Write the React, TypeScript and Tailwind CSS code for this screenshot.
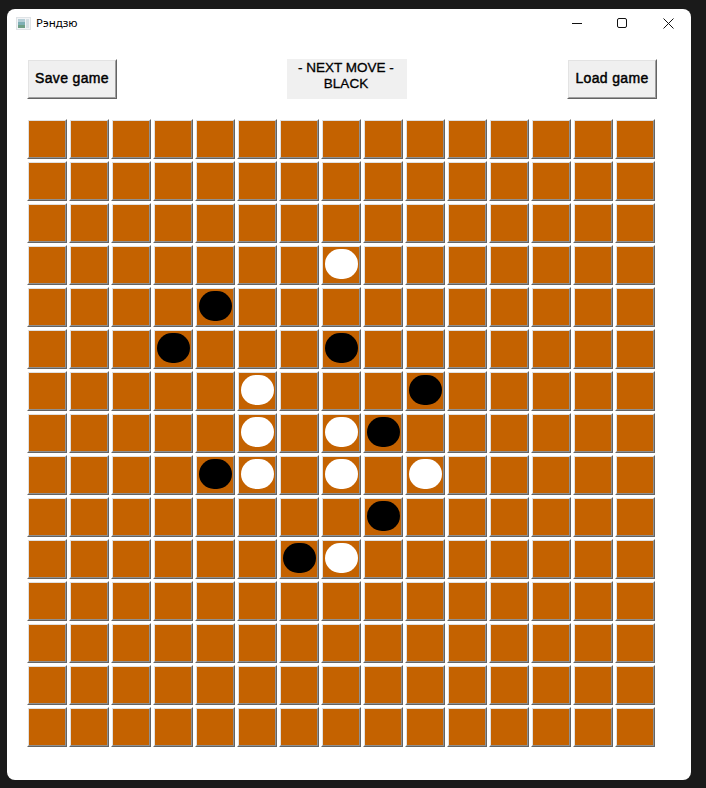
const black = new Set(["4,4","5,3","5,7","6,9","7,8","8,4","9,8","10,6"]);
const white = new Set(["3,7","6,5","7,5","7,7","8,5","8,7","8,9","10,7"]);
const rows = Array.from({ length: 15 }, (_, r) => r);
const cols = Array.from({ length: 15 }, (_, c) => c);

function Cell({ stone }: { stone?: "black" | "white" }) {
  return (
    <div className="w-[40px] h-[40px] border border-t-white border-l-white border-r-[#646464] border-b-[#646464]">
      <div className="w-full h-full border border-t-[#e0e0e0] border-l-[#e0e0e0] border-r-[#909090] border-b-[#909090] bg-[#c46200] flex justify-center pt-[2px]">
        {stone && (
          <div className={"w-[33px] h-[30px] rounded-full " + (stone === "black" ? "bg-black" : "bg-white")} />
        )}
      </div>
    </div>
  );
}

function WinButton({ label }: { label: string }) {
  return (
    <button className="w-[90px] h-[40px] border border-t-white border-l-white border-r-[#646464] border-b-[#646464]">
      <span className="w-full h-full border border-t-[#e3e3e3] border-l-[#e3e3e3] border-r-[#a0a0a0] border-b-[#a0a0a0] bg-[#f0f0f0] flex items-center justify-center text-[14px] text-black tracking-[0.35px] pb-[1px] [-webkit-text-stroke:0.45px_black]">
        {label}
      </span>
    </button>
  );
}

export default function App() {
  return (
    <div className="w-[706px] h-[788px] bg-[#1a1a1a] pt-[9px] pl-[7px]" style={{ fontFamily: '"Liberation Sans", Arial, sans-serif' }}>
      <div className="w-[684px] h-[771px] bg-white rounded-lg overflow-hidden">
        <div className="h-[30px] flex items-center pl-[9px] relative">
          <svg width="15" height="13" viewBox="0 0 15 13" className="mt-[-2px]">
            <rect x="0" y="0" width="15" height="13" fill="#dfe3e6" />
            <rect x="1" y="1" width="13" height="11" fill="#f2f4f6" />
            <rect x="2" y="2" width="7" height="9" fill="#7fb0b6" />
            <rect x="2" y="2" width="7" height="3" fill="#b5ced6" />
            <rect x="2" y="8" width="7" height="3" fill="#6f9f86" />
            <rect x="10" y="2" width="3" height="9" fill="#d5dfe4" />
          </svg>
          <span className="ml-[5px] text-[11.5px] text-black mt-[-2px]" style={{ fontFamily: '"Noto Sans", sans-serif' }}>Рэндзю</span>
          <div className="ml-auto flex items-center pr-[17px] gap-[35px] mt-[-2px]">
            <svg width="10" height="10" viewBox="0 0 10 10"><path d="M0 5.5H10" stroke="#111" strokeWidth="1" /></svg>
            <svg width="10" height="10" viewBox="0 0 10 10"><rect x="0.5" y="0.5" width="9" height="9" rx="1.5" fill="none" stroke="#111" /></svg>
            <svg width="11" height="11" viewBox="0 0 11 11" className="ml-[1px]"><path d="M0.5 0.5L10.5 10.5M10.5 0.5L0.5 10.5" stroke="#111" strokeWidth="1" fill="none" /></svg>
          </div>
        </div>
        <div className="mt-[20px] pl-[20px] flex h-[40px]">
          <WinButton label="Save game" />
          <div className="ml-[170px] mr-[160px] w-[120px] h-[40px] bg-[#f0f0f0] text-center text-[13.5px] leading-[16px] pt-[1px] pr-[2px] text-black [-webkit-text-stroke:0.3px_black]">
            - NEXT MOVE -
            <br />
            BLACK
          </div>
          <WinButton label="Load game" />
        </div>
        <div className="mt-[20px] ml-[20px] flex flex-col gap-[2px]">
          {rows.map((r) => (
            <div key={r} className="flex gap-[2px]">
              {cols.map((c) => {
                const key = r + "," + c;
                return <Cell key={c} stone={black.has(key) ? "black" : white.has(key) ? "white" : undefined} />;
              })}
            </div>
          ))}
        </div>
      </div>
    </div>
  );
}
